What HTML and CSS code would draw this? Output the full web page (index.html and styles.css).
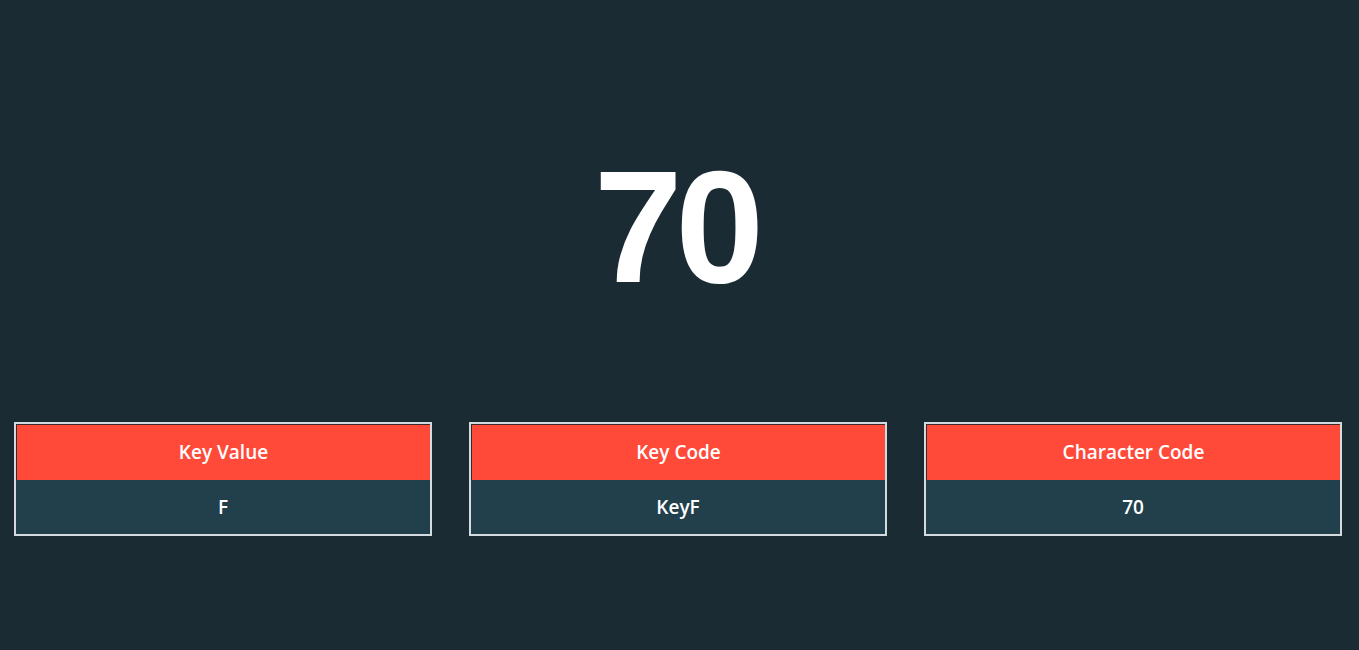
FILE: index.html
```html
<!DOCTYPE html>
<html>
<head>
<meta charset="utf-8">
<link rel="stylesheet" href="styles.css">
</head>
<body>
<main class="page">
  <div class="big">70</div>
  <section class="cards">
    <div class="card">
      <div class="card-head">Key Value</div>
      <div class="card-val">F</div>
    </div>
    <div class="card">
      <div class="card-head">Key Code</div>
      <div class="card-val">KeyF</div>
    </div>
    <div class="card">
      <div class="card-head">Character Code</div>
      <div class="card-val">70</div>
    </div>
  </section>
</main>
</body>
</html>
```
FILE: styles.css
```css
html, body {
  margin: 0;
  padding: 0;
  background: #1a2b33;
  height: 100%;
}
.page {
  display: flex;
  flex-direction: column;
  align-items: stretch;
}
.big {
  font-family: "Liberation Sans", Arial, sans-serif;
  font-weight: 700;
  font-size: 159px;
  letter-spacing: -7px;
  line-height: 1;
  color: #ffffff;
  text-align: center;
  padding-top: 148px;
  padding-right: 8px;
  height: 272px;
  box-sizing: border-box;
  margin-bottom: 150px;
}
.cards {
  display: flex;
  gap: 37px;
  padding: 0 17px 0 14px;
}
.card {
  flex: 1;
  border: 2px solid #d3dbe0;
  display: flex;
  flex-direction: column;
  font-family: "Open Sans", "Noto Sans", sans-serif;
  font-weight: 600;
  color: #ffffff;
  font-size: 19px;
  text-align: center;
}
.card-head {
  background: #ff4a3a;
  height: 55px;
  line-height: 55px;
  border-top: 1px solid #3a2b2b;
  border-left: 1px solid #3a2b2b;
}
.card-val {
  background: #21404c;
  height: 54px;
  line-height: 54px;
}
```
